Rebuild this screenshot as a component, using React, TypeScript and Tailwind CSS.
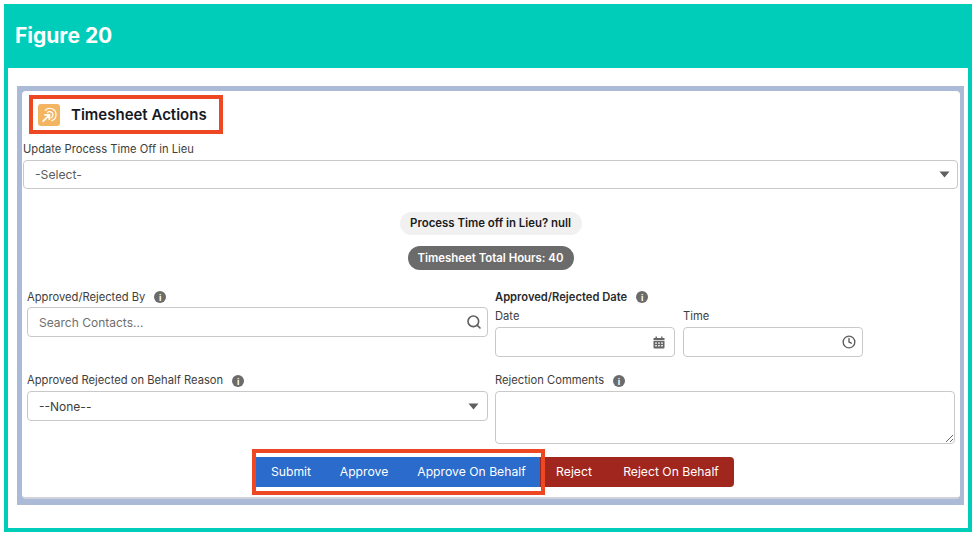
import { Search, Clock } from "lucide-react";
import type { ReactNode } from "react";

function Caret() {
  return (
    <svg width="11" height="7" viewBox="0 0 11 7" className="shrink-0 fill-[#5f5f5f]">
      <path d="M0.5 0.5h10L5.5 6.5z" />
    </svg>
  );
}

function InfoDot() {
  return (
    <span className="flex h-[12px] w-[12px] items-center justify-center rounded-full bg-[#6b6b6b] text-[9px] leading-none font-bold text-white">
      i
    </span>
  );
}

function CalendarIcon() {
  return (
    <svg width="12" height="13" viewBox="0 0 12 13" className="fill-[#666]">
      <rect x="2.5" y="0.5" width="1.4" height="2.5" />
      <rect x="8.1" y="0.5" width="1.4" height="2.5" />
      <rect x="0.5" y="2" width="11" height="2.2" rx="0.5" />
      <path d="M0.5 5h11v6.5a1 1 0 0 1-1 1h-9a1 1 0 0 1-1-1z" />
      <g className="fill-white">
        <rect x="2.2" y="6.4" width="1.6" height="1.4" />
        <rect x="5.2" y="6.4" width="1.6" height="1.4" />
        <rect x="8.2" y="6.4" width="1.6" height="1.4" />
        <rect x="2.2" y="9" width="1.6" height="1.4" />
        <rect x="5.2" y="9" width="1.6" height="1.4" />
        <rect x="8.2" y="9" width="1.6" height="1.4" />
      </g>
    </svg>
  );
}

function ActionsIcon() {
  return (
    <div className="flex h-[22px] w-[22px] items-center justify-center rounded-[3px] bg-[#f3b562]">
      <svg width="18" height="18" viewBox="0 0 18 18" fill="none" stroke="white" strokeLinecap="round">
        <path d="M5.2 4.4A6.2 6.2 0 0 1 16 8.8a6.2 6.2 0 0 1-4.4 5.9" strokeWidth="1.2" />
        <path d="M7.4 6.4A3.4 3.4 0 0 1 13 8.8a3.4 3.4 0 0 1-1.6 2.9" strokeWidth="1.2" />
        <path d="M3.2 15.2L9 9.4M5 8.8h4.4v4.4" strokeWidth="1.8" />
      </svg>
    </div>
  );
}

function Field({ label, children }: { label: ReactNode; children: ReactNode }) {
  return (
    <div className="flex flex-col">
      <div className="flex h-[16px] items-center gap-[9px] text-[11.2px] leading-none text-[#3e3e3c]">{label}</div>
      {children}
    </div>
  );
}

const inputBox = "flex items-center rounded-[4px] border border-[#c9c9c9] bg-white";

export default function App() {
  return (
    <div className="h-[534px] w-[976px] overflow-hidden bg-white pt-[4px] pl-[4px] font-['Inter',sans-serif]">
      <div className="flex h-[528px] w-[968px] flex-col border-[4px] border-t-0 border-[#00cdb9]">
        <div className="-mx-[4px] flex h-[64px] shrink-0 items-center bg-[#00cdb9] pb-px pl-[11px] text-[21px] font-bold text-white">
          Figure 20
        </div>

        <div className="mt-[18px] ml-[9px] h-[419px] w-[947px] bg-[#abbbd7] pt-[5px] pl-[5px]">
          <div className="relative flex h-[408px] w-[938px] flex-col rounded-[4px] border-b-2 border-b-[#cfd3d9] bg-white pr-[2px] pl-px">
            {/* header */}
            <div className="flex h-[50px] items-center gap-[11px] pb-[2px] pl-[15px]">
              <ActionsIcon />
              <h2 className="text-[15px] font-semibold text-[#16191f]">Timesheet Actions</h2>
            </div>

            <div className="flex h-[19px] items-start pt-[1px] text-[11.2px] leading-[14px] text-[#3e3e3c]">
              Update Process Time Off in Lieu
            </div>
            <div className={`${inputBox} h-[29px] justify-between pr-[7px] pl-[11px] text-[12.2px] text-[#5c5c5c]`}>
              <span className="pt-px">-Select-</span>
              <Caret />
            </div>

            {/* status pills */}
            <div className="mt-[23px] flex flex-col items-center gap-[11px]">
              <span className="flex h-[23px] w-[182px] items-center justify-center rounded-full bg-[#f1f1f1] pt-px text-[11.4px] font-semibold text-[#1c1c1c]">
                Process Time off in Lieu? null
              </span>
              <span className="flex h-[24px] w-[166px] items-center justify-center rounded-full bg-[#6b6b6b] pt-px text-[11.4px] font-semibold text-white">
                Timesheet Total Hours: 40
              </span>
            </div>

            {/* form */}
            <div className="mt-[19px] grid grid-cols-[461px_460px] gap-x-[7px] pl-[4px]">
              <div className="flex h-[84px] flex-col">
                <Field
                  label={
                    <>
                      <span className="pt-[2px]">Approved/Rejected By</span> <InfoDot />
                    </>
                  }
                >
                  <div className={`${inputBox} mt-[2px] h-[30px] justify-between pr-[5px] pl-[11px] text-[12px] text-[#6f6f6f]`}>
                    <span className="pt-[2px]">Search Contacts...</span>
                    <Search size={16} strokeWidth={2.4} className="text-[#5f5f5f]" />
                  </div>
                </Field>
              </div>
              <div className="flex h-[84px] flex-col">
                <div className="flex h-[16px] items-center gap-[9px] text-[11.2px] leading-none font-semibold text-[#2b2b2b]">
                  <span className="pt-[2px]">Approved/Rejected Date</span> <InfoDot />
                </div>
                <div className="mt-[3px] flex gap-[8px]">
                  <Field label={<span className="pt-[2px]">Date</span>}>
                    <div className={`${inputBox} mt-[3px] h-[30px] w-[180px] justify-end pr-[9px]`}>
                      <CalendarIcon />
                    </div>
                  </Field>
                  <Field label={<span className="pt-[2px]">Time</span>}>
                    <div className={`${inputBox} mt-[3px] h-[30px] w-[180px] justify-end pr-[6px]`}>
                      <Clock size={14} strokeWidth={2.4} className="text-[#5f5f5f]" />
                    </div>
                  </Field>
                </div>
              </div>

              <Field
                label={
                  <>
                    Approved Rejected on Behalf Reason <InfoDot />
                  </>
                }
              >
                <div className={`${inputBox} mt-[2px] h-[30px] justify-between pr-[8px] pl-[11px] text-[12px] text-[#3e3e3c]`}>
                  <span className="pt-px">--None--</span>
                  <Caret />
                </div>
              </Field>
              <Field
                label={
                  <>
                    Rejection Comments <InfoDot />
                  </>
                }
              >
                <textarea className="mt-[2px] h-[53px] rounded-[4px] border border-[#c9c9c9] bg-white" />
              </Field>
            </div>

            {/* action buttons */}
            <div className="mt-[13px] flex justify-center pl-[9px] text-[12.2px] text-white">
              <div className="flex h-[30px] items-center bg-[#2b6bcb]">
                <button className="w-[69px] pl-[1px]">Submit</button>
                <button className="w-[78px]">Approve</button>
                <button className="w-[137px]">Approve On Behalf</button>
              </div>
              <div className="flex h-[30px] items-center rounded-r-[4px] bg-[#a1261e]">
                <button className="w-[68px]">Reject</button>
                <button className="w-[126px]">Reject On Behalf</button>
              </div>
            </div>

            {/* red highlight boxes laid over the card */}
            <div className="pointer-events-none absolute top-[4px] left-[7px] h-[39px] w-[194px] border-[4px] border-[#ee4723]" />
            <div className="pointer-events-none absolute top-[358px] left-[230px] h-[46px] w-[293px] border-[4px] border-[#ee4723]" />
          </div>
        </div>
      </div>
    </div>
  );
}
